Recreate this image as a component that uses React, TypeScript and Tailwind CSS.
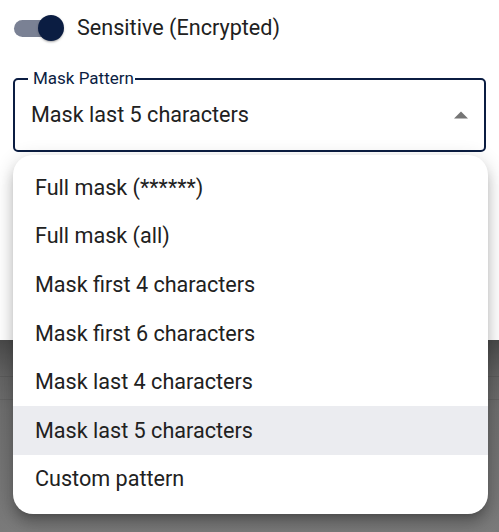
const options = [
  "Full mask (******)",
  "Full mask (all)",
  "Mask first 4 characters",
  "Mask first 6 characters",
  "Mask last 4 characters",
  "Mask last 5 characters",
  "Custom pattern",
];

const selected = "Mask last 5 characters";

function Toggle() {
  return (
    <span className="relative flex h-[28px] w-[52px] items-center">
      <span className="ml-[1px] h-[17px] w-[44px] rounded-full bg-[#7a8194]" />
      <span className="absolute left-[25px] top-[1px] h-[26px] w-[26px] rounded-full bg-[#0b1d42] shadow-[0_2px_2px_-1px_rgba(0,0,0,0.25),0_1px_3px_0_rgba(0,0,0,0.15)]" />
    </span>
  );
}

export default function App() {
  return (
    <div
      className="relative h-[532px] w-full overflow-hidden bg-white text-[#212121]"
      style={{ fontFamily: "Roboto, 'Noto Sans', sans-serif" }}
    >
      <div className="flex h-[340px] flex-col bg-white px-[13px]">
        <div className="flex h-[56px] items-center gap-[12px]">
          <Toggle />
          <span className="text-[21.6px] leading-none">Sensitive (Encrypted)</span>
        </div>

        <div className="relative mt-[22px] flex h-[74px] items-center justify-between rounded-[5px] border-2 border-[#0b1d42] pl-[16px] pr-[14px]">
          <span className="absolute -top-[12px] left-[13px] bg-white pl-[5px] pr-[1px] text-[17px] leading-[20px] text-[#0b1d42]">
            Mask Pattern
          </span>
          <span className="text-[21.6px] leading-none">{selected}</span>
          <svg width="14" height="8" viewBox="0 0 14 8" className="mr-[2px]">
            <polygon points="0,7.5 7,0.5 14,7.5" fill="#757575" />
          </svg>
        </div>
      </div>

      <div className="flex h-[192px] flex-col bg-[linear-gradient(to_bottom,#4a4a4a_0px,#636363_36px,#6e6e6e_70px,#7a7a7a_100%)]">
        <div className="mt-[36px] h-px bg-[#5a5a5a]" />
        <div className="mt-[22px] h-px bg-[#626262]" />
      </div>

      <ul className="absolute left-[13px] top-[155px] w-[475px] rounded-[20px] bg-white pb-[10px] pt-[8px] shadow-[0_6px_6px_-4px_rgba(0,0,0,0.2),0_10px_12px_1px_rgba(0,0,0,0.14),0_4px_18px_3px_rgba(0,0,0,0.12)]">
        {options.map((option) => (
          <li
            key={option}
            className={`flex h-[48.67px] items-center pl-[22px] text-[21.6px] leading-none ${
              option === selected ? "bg-[#ebecf0]" : ""
            }`}
          >
            {option}
          </li>
        ))}
      </ul>
    </div>
  );
}
